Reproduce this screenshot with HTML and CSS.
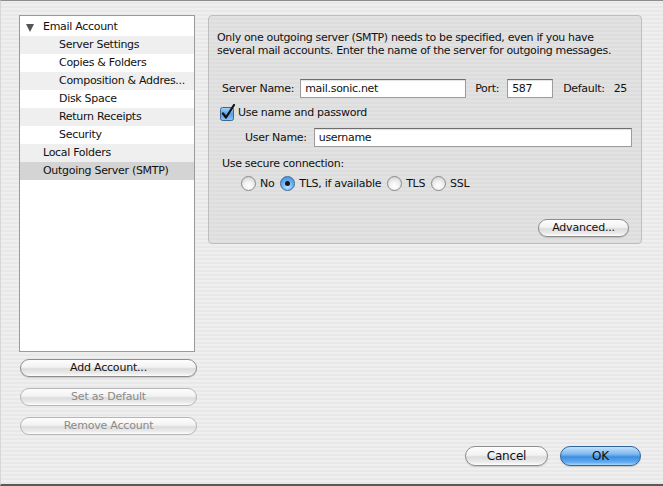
FILE: index.html
```html
<!doctype html>
<html>
  <head>
    <link rel="stylesheet" href="styles.css">
  </head>
  <body>
    <div class="window">
      <div class="side">
        <div class="tree">
          <div class="row"><span class="twisty"></span>Email Account</div>
          <div class="row child alt">Server Settings</div>
          <div class="row child">Copies &amp; Folders</div>
          <div class="row child alt">Composition &amp; Addres...</div>
          <div class="row child">Disk Space</div>
          <div class="row child alt">Return Receipts</div>
          <div class="row child">Security</div>
          <div class="row top alt">Local Folders</div>
          <div class="row top selected">Outgoing Server (SMTP)</div>
        </div>
        <div class="side-buttons">
          <button class="aqua">Add Account...</button>
          <button class="aqua" disabled>Set as Default</button>
          <button class="aqua" disabled>Remove Account</button>
        </div>
      </div>

      <div class="main">
        <div class="group">
          <p class="intro">Only one outgoing server (SMTP) needs to be specified, even if you have several mail accounts. Enter the name of the server for outgoing messages.</p>

          <div class="server-row">
            <label class="lbl">Server Name:</label>
            <div class="field server">mail.sonic.net</div>
            <label class="lbl port-lbl">Port:</label>
            <div class="field port">587</div>
            <span class="lbl default">Default:</span>
            <span class="lbl">25</span>
          </div>

          <div class="check-row">
            <svg class="check" width="16" height="17" viewBox="0 0 16 17">
              <defs>
                <linearGradient id="cb" x1="0" y1="0" x2="0" y2="1">
                  <stop offset="0" stop-color="#a9d3fb"/>
                  <stop offset="0.5" stop-color="#5a9fe6"/>
                  <stop offset="1" stop-color="#8cc4f7"/>
                </linearGradient>
              </defs>
              <rect x="0.5" y="3.5" width="13" height="13" rx="2" fill="url(#cb)" stroke="#3d6796"/>
              <path d="M3 9.5 L6 13.5 L14 1" fill="none" stroke="#111" stroke-width="2.2" stroke-linecap="round" stroke-linejoin="round"/>
            </svg>
            <span>Use name and password</span>
          </div>

          <div class="user-row">
            <label class="lbl">User Name:</label>
            <div class="field user">username</div>
          </div>

          <div class="secure-lbl">Use secure connection:</div>
          <div class="radios">
            <span class="radio"></span><span class="rtext">No</span>
            <span class="radio on"></span><span class="rtext">TLS, if available</span>
            <span class="radio"></span><span class="rtext">TLS</span>
            <span class="radio"></span><span class="rtext">SSL</span>
          </div>

          <div class="adv-row">
            <button class="aqua adv">Advanced...</button>
          </div>
        </div>

        <div class="dialog-buttons">
          <button class="aqua cancel">Cancel</button>
          <button class="aqua ok">OK</button>
        </div>
      </div>
    </div>
  </body>
</html>
```

FILE: styles.css
```css
html, body {
  margin: 0;
  padding: 0;
}

body {
  width: 663px;
  height: 486px;
  overflow: hidden;
  font-family: "DejaVu Sans", sans-serif;
  font-size: 11px;
  letter-spacing: -0.3px;
  color: #111;
  background: repeating-linear-gradient(to bottom, #efefef 0, #efefef 2px, #e8e8e8 2px, #e8e8e8 4px);
}

.window {
  box-sizing: border-box;
  height: 486px;
  border-top: 1px solid #8c8c8c;
  border-bottom: 2px solid #5a5a5a;
  border-left: 1px solid #d6d6d6;
  display: flex;
  padding: 14px 0 0 18px;
}

/* left column */
.side {
  width: 178px;
  display: flex;
  flex-direction: column;
}

.tree {
  box-sizing: border-box;
  width: 176px;
  height: 337px;
  background: #fff;
  border: 1px solid #9a9a9a;
  padding-top: 2px;
}

.row {
  height: 18px;
  line-height: 18px;
  padding-left: 23px;
  white-space: nowrap;
  overflow: hidden;
  position: relative;
}

.row.child {
  padding-left: 39px;
}

.row.alt {
  background: #efefef;
}

.row.selected {
  background: #d4d4d4;
}

.twisty {
  position: absolute;
  left: 6px;
  top: 6px;
  width: 0;
  height: 0;
  border-left: 4px solid transparent;
  border-right: 4px solid transparent;
  border-top: 8px solid #555;
}

.side-buttons {
  display: flex;
  flex-direction: column;
  gap: 11px;
  margin-top: 7px;
  padding-left: 1px;
}

.side-buttons .aqua {
  width: 177px;
}

/* aqua buttons */
.aqua {
  box-sizing: border-box;
  height: 18px;
  padding: 0 10px;
  border: 1px solid #8e8e8e;
  border-radius: 9px;
  font-family: "DejaVu Sans", sans-serif;
  font-size: 11px;
  letter-spacing: -0.2px;
  color: #111;
  line-height: 16px;
  background: linear-gradient(to bottom, #fdfdfd 0%, #f2f2f2 45%, #dcdcdc 55%, #ececec 85%, #ffffff 100%);
  box-shadow: 0 1px 1px rgba(0, 0, 0, 0.15);
}

.aqua:disabled {
  color: #8a8a8a;
  border-color: #b6b6b6;
  box-shadow: none;
}

/* right column */
.main {
  margin-left: 11px;
  width: 434px;
  display: flex;
  flex-direction: column;
}

.group {
  box-sizing: border-box;
  height: 229px;
  background: repeating-linear-gradient(to bottom, #e2e2e2 0, #e2e2e2 2px, #dddddd 2px, #dddddd 4px);
  border: 1px solid #bdbdbd;
  border-radius: 4px;
  padding: 15px 8px 0 8px;
}

.intro {
  margin: 0;
  line-height: 13px;
  letter-spacing: -0.35px;
}

.lbl {
  white-space: nowrap;
}

.field {
  box-sizing: border-box;
  height: 19px;
  line-height: 17px;
  background: #fff;
  border: 1px solid #9c9c9c;
  border-top-color: #6e6e6e;
  padding-left: 4px;
  box-shadow: inset 0 1px 1px rgba(0, 0, 0, 0.12);
}

.server-row {
  display: flex;
  align-items: center;
  margin-top: 22px;
  padding-left: 5px;
}

.field.server {
  width: 166px;
  margin-left: 6px;
}

.port-lbl {
  margin-left: 9px;
}

.field.port {
  width: 46px;
  margin-left: 8px;
}

.default {
  margin-left: 10px;
  margin-right: 9px;
}

.check-row {
  display: flex;
  align-items: center;
  gap: 2px;
  margin-top: 6px;
  padding-left: 3px;
}

.user-row {
  display: flex;
  align-items: center;
  margin-top: 7px;
  padding-left: 28px;
}

.field.user {
  width: 318px;
  margin-left: 7px;
}

.secure-lbl {
  margin-top: 10px;
  padding-left: 5px;
}

.radios {
  display: flex;
  align-items: center;
  margin-top: 6px;
  padding-left: 24px;
}

.radio {
  box-sizing: border-box;
  width: 15px;
  height: 15px;
  border-radius: 50%;
  border: 1px solid #8a8a8a;
  background: radial-gradient(circle at 50% 70%, #ffffff 0%, #f2f2f2 40%, #c9c9c9 100%);
  margin-right: 4px;
  position: relative;
}

.radio.on {
  border-color: #3c6a9e;
  background: radial-gradient(circle at 50% 75%, #c4e3ff 0%, #6aaeef 50%, #3f86d6 100%);
}

.radio.on::after {
  content: "";
  position: absolute;
  left: 4px;
  top: 4px;
  width: 5px;
  height: 5px;
  border-radius: 50%;
  background: #1a1a1a;
}

.rtext {
  margin-right: 6px;
}

.adv-row {
  display: flex;
  justify-content: flex-end;
  margin-top: 28px;
  padding-right: 4px;
}

.adv {
  width: 91px;
}

.dialog-buttons {
  display: flex;
  justify-content: flex-end;
  gap: 12px;
  margin-top: auto;
  margin-bottom: 18px;
  padding-right: 1px;
}

.cancel,
.ok {
  height: 20px;
  border-radius: 10px;
  font-size: 12px;
  line-height: 18px;
}

.cancel {
  width: 83px;
}

.ok {
  width: 81px;
  border-color: #34649c;
  background: linear-gradient(to bottom, #c2e1fb 0%, #7db8ee 40%, #3d8ee0 55%, #62acf0 85%, #a8dafc 100%);
}
```
